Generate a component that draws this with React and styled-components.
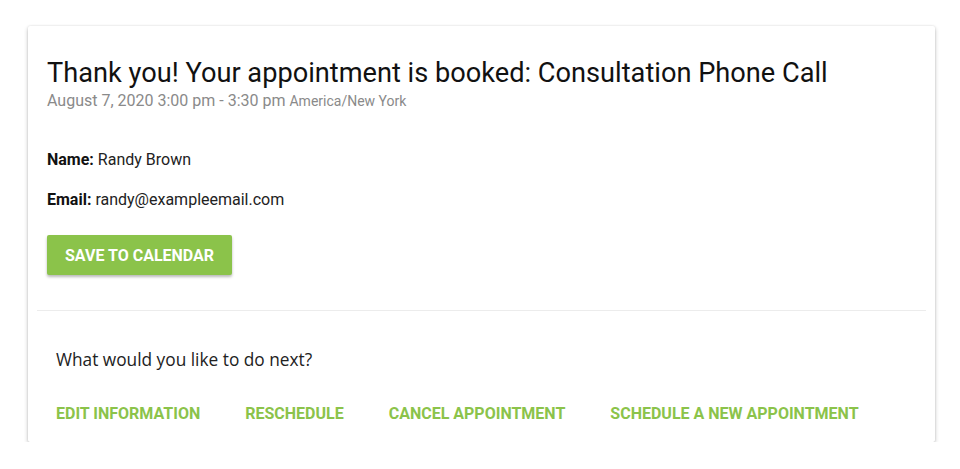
import React from "react";
import styled, { createGlobalStyle } from "styled-components";

const Global = createGlobalStyle`
  html, body { margin: 0; padding: 0; background: #fff; }
  body { font-family: Roboto, "Liberation Sans", Arial, sans-serif; color: #212121; }
  * { box-sizing: border-box; }
`;

const Page = styled.div`
  padding: 26px 25px 0 28px;
`;

const Card = styled.div`
  width: 907px;
  height: 416px;
  background: #fff;
  box-shadow: 0 2px 4px rgba(0,0,0,0.24), 0 0 2px rgba(0,0,0,0.12);
  border-radius: 2px;
  display: flex;
  flex-direction: column;
`;

const Top = styled.div`
  padding: 30px 19px 0 19px;
`;

const Title = styled.h1`
  margin: 0;
  font-size: 27.2px;
  font-weight: 400;
  line-height: 34px;
  color: #111;
`;

const When = styled.div`
  font-size: 16px;
  color: #8a8a8a;
  line-height: 22px;
`;

const Zone = styled.span`
  font-size: 14px;
`;

const Field = styled.p`
  margin: ${p => p.$first ? "38px" : "20px"} 0 0 0;
  font-size: 16px;
  line-height: 20px;
  color: #222;
  b { font-weight: 700; color: #111; }
`;

const SaveButton = styled.button`
  margin-top: 25px;
  height: 40px;
  padding: 0 18px;
  border: none;
  border-radius: 2px;
  background: #8bc34a;
  color: #fff;
  font-family: Roboto, "Liberation Sans", Arial, sans-serif;
  font-weight: 700;
  font-size: 16px;
  text-transform: uppercase;
  box-shadow: 0 2px 3px rgba(0,0,0,0.28);
  cursor: pointer;
`;

const Divider = styled.hr`
  margin: 35px 9px 0 9px;
  border: none;
  border-top: 1px solid #ececec;
`;

const Bottom = styled.div`
  padding: 0 28px;
`;

const Question = styled.p`
  margin: 38px 0 0 0;
  font-family: "Open Sans", "Noto Sans", sans-serif;
  font-size: 17.3px;
  line-height: 22px;
  color: #222;
`;

const Actions = styled.div`
  display: flex;
  gap: 45px;
  margin-top: 33px;
`;

const ActionLink = styled.a`
  font-family: Roboto, "Liberation Sans", Arial, sans-serif;
  font-weight: 700;
  font-size: 16px;
  line-height: 20px;
  color: #8bc34a;
  text-transform: uppercase;
  text-decoration: none;
  cursor: pointer;
`;

export default function App() {
  const actions = ["Edit Information", "Reschedule", "Cancel Appointment", "Schedule a New Appointment"];
  return (
    <Page>
      <Global />
      <Card>
        <Top>
          <Title>Thank you! Your appointment is booked: Consultation Phone Call</Title>
          <When>August 7, 2020 3:00 pm - 3:30 pm <Zone>America/New York</Zone></When>
          <Field $first><b>Name:</b> Randy Brown</Field>
          <Field><b>Email:</b> randy@exampleemail.com</Field>
          <SaveButton>Save to Calendar</SaveButton>
        </Top>
        <Divider />
        <Bottom>
          <Question>What would you like to do next?</Question>
          <Actions>
            {actions.map(a => <ActionLink key={a}>{a}</ActionLink>)}
          </Actions>
        </Bottom>
      </Card>
    </Page>
  );
}
